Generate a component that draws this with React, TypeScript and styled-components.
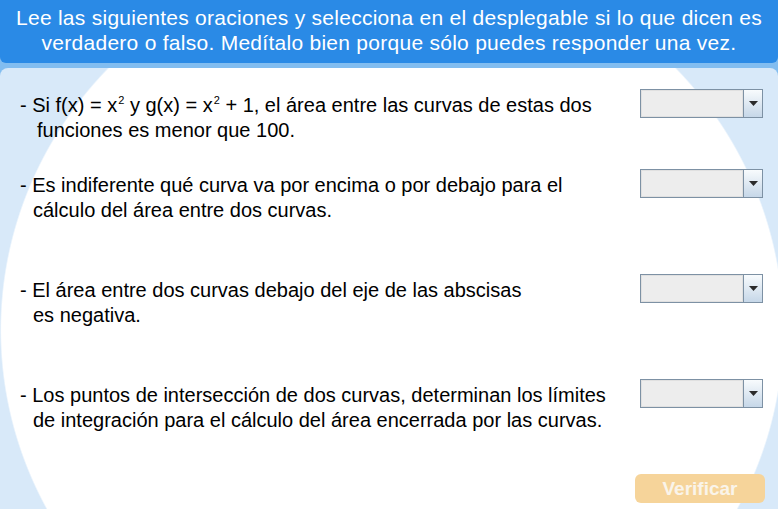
import React, { FC } from 'react';
import styled, { createGlobalStyle } from 'styled-components';

const GlobalStyle = createGlobalStyle`
    html, body {
        margin: 0;
        padding: 0;
        background: #82bdf0;
        font-family: "Liberation Sans", Arial, sans-serif;
    }
`;

const Sup = styled.sup`
    font-size: 11px;
    vertical-align: 8px;
    line-height: 0;
    margin-left: 1px;
`;

type Statement = {
    lines: React.ReactNode[];
    indent: number;
    space: number;
};

const statements: Statement[] = [
    {
        lines: [
            <>- Si f(x) = x<Sup>2</Sup> y g(x) = x<Sup>2</Sup> + 1, el área entre las curvas de estas dos</>,
            'funciones es menor que 100.',
        ],
        indent: 17,
        space: 80,
    },
    {
        lines: [
            '- Es indiferente qué curva va por encima o por debajo para el',
            'cálculo del área entre dos curvas.',
        ],
        indent: 13,
        space: 105,
    },
    {
        lines: [
            '- El área entre dos curvas debajo del eje de las abscisas',
            'es negativa.',
        ],
        indent: 13,
        space: 105,
    },
    {
        lines: [
            '- Los puntos de intersección de dos curvas, determinan los límites',
            'de integración para el cálculo del área encerrada por las curvas.',
        ],
        indent: 13,
        space: 0,
    },
];

const App: FC = () => {
    return (
        <>
            <GlobalStyle />
            <Page>
                <Header>
                    <p>Lee las siguientes oraciones y selecciona en el desplegable si lo que dicen es</p>
                    <p>verdadero o falso. Medítalo bien porque sólo puedes responder una vez.</p>
                </Header>

                <Panel>
                    <List>
                        {statements.map((s, i) => (
                            <Row key={i} space={s.space}>
                                <Text>
                                    {s.lines.map((line, j) => (
                                        <Line key={j} indent={j === 0 ? 0 : s.indent}>{line}</Line>
                                    ))}
                                </Text>
                                <Select>
                                    <SelectField />
                                    <SelectArrow>
                                        <svg width="9" height="5" viewBox="0 0 9 5">
                                            <path d="M0 0 H9 L4.5 5 Z" fill="#2b2b2b" />
                                        </svg>
                                    </SelectArrow>
                                </Select>
                            </Row>
                        ))}
                    </List>

                    <Footer>
                        <VerifyButton disabled>Verificar</VerifyButton>
                    </Footer>
                </Panel>
            </Page>
        </>
    );
};

export default App;

const Page = styled.div`
    width: 778px;
    height: 509px;
    display: flex;
    flex-direction: column;
    gap: 5px;
    overflow: hidden;
`;

const Header = styled.div`
    height: 63px;
    box-sizing: border-box;
    padding-top: 5px;
    background: #2a8ae6;
    border-radius: 0 0 6px 6px;
    color: #fff;
    text-align: center;
    font-size: 21px;
    letter-spacing: 0.27px;
    line-height: 25px;

    p {
        margin: 0;
        white-space: nowrap;
    }
`;

const Panel = styled.div`
    flex: 1;
    display: flex;
    flex-direction: column;
    border-radius: 8px 8px 0 0;
    background: radial-gradient(392px 381px at 392px 262px, #ffffff 99.6%, #d8e9f9 100%);
    background-color: #d8e9f9;
`;

const List = styled.div`
    padding: 21px 15px 0 20px;
    flex: 1;
`;

const Row = styled.div<{ space: number }>`
    display: flex;
    align-items: flex-start;
    justify-content: space-between;
    height: ${(p) => p.space}px;
`;

const Text = styled.div`
    padding-top: 4px;
    font-size: 20px;
    line-height: 25px;
    color: #000;
`;

const Line = styled.div<{ indent: number }>`
    white-space: nowrap;
    padding-left: ${(p) => p.indent}px;
`;

const Select = styled.div`
    display: flex;
    width: 123px;
    height: 29px;
    box-sizing: border-box;
    border: 1px solid #7d91a4;
    flex-shrink: 0;
`;

const SelectField = styled.div`
    flex: 1;
    background: #ededed;
    border-right: 1px solid #7d91a4;
    box-shadow: inset 0 0 0 1px #e0e0e0;
`;

const SelectArrow = styled.div`
    width: 18px;
    display: flex;
    align-items: center;
    justify-content: center;
    background: linear-gradient(#f8fbfd, #c6d7e8);
`;

const Footer = styled.div`
    display: flex;
    justify-content: flex-end;
    padding: 0 13px 6px 0;
`;

const VerifyButton = styled.button`
    width: 130px;
    height: 29px;
    border: none;
    border-radius: 6px;
    background: #f6d49a;
    color: #faf4ea;
    font-family: "Liberation Sans", Arial, sans-serif;
    font-weight: bold;
    font-size: 19px;
    padding: 0;
`;
